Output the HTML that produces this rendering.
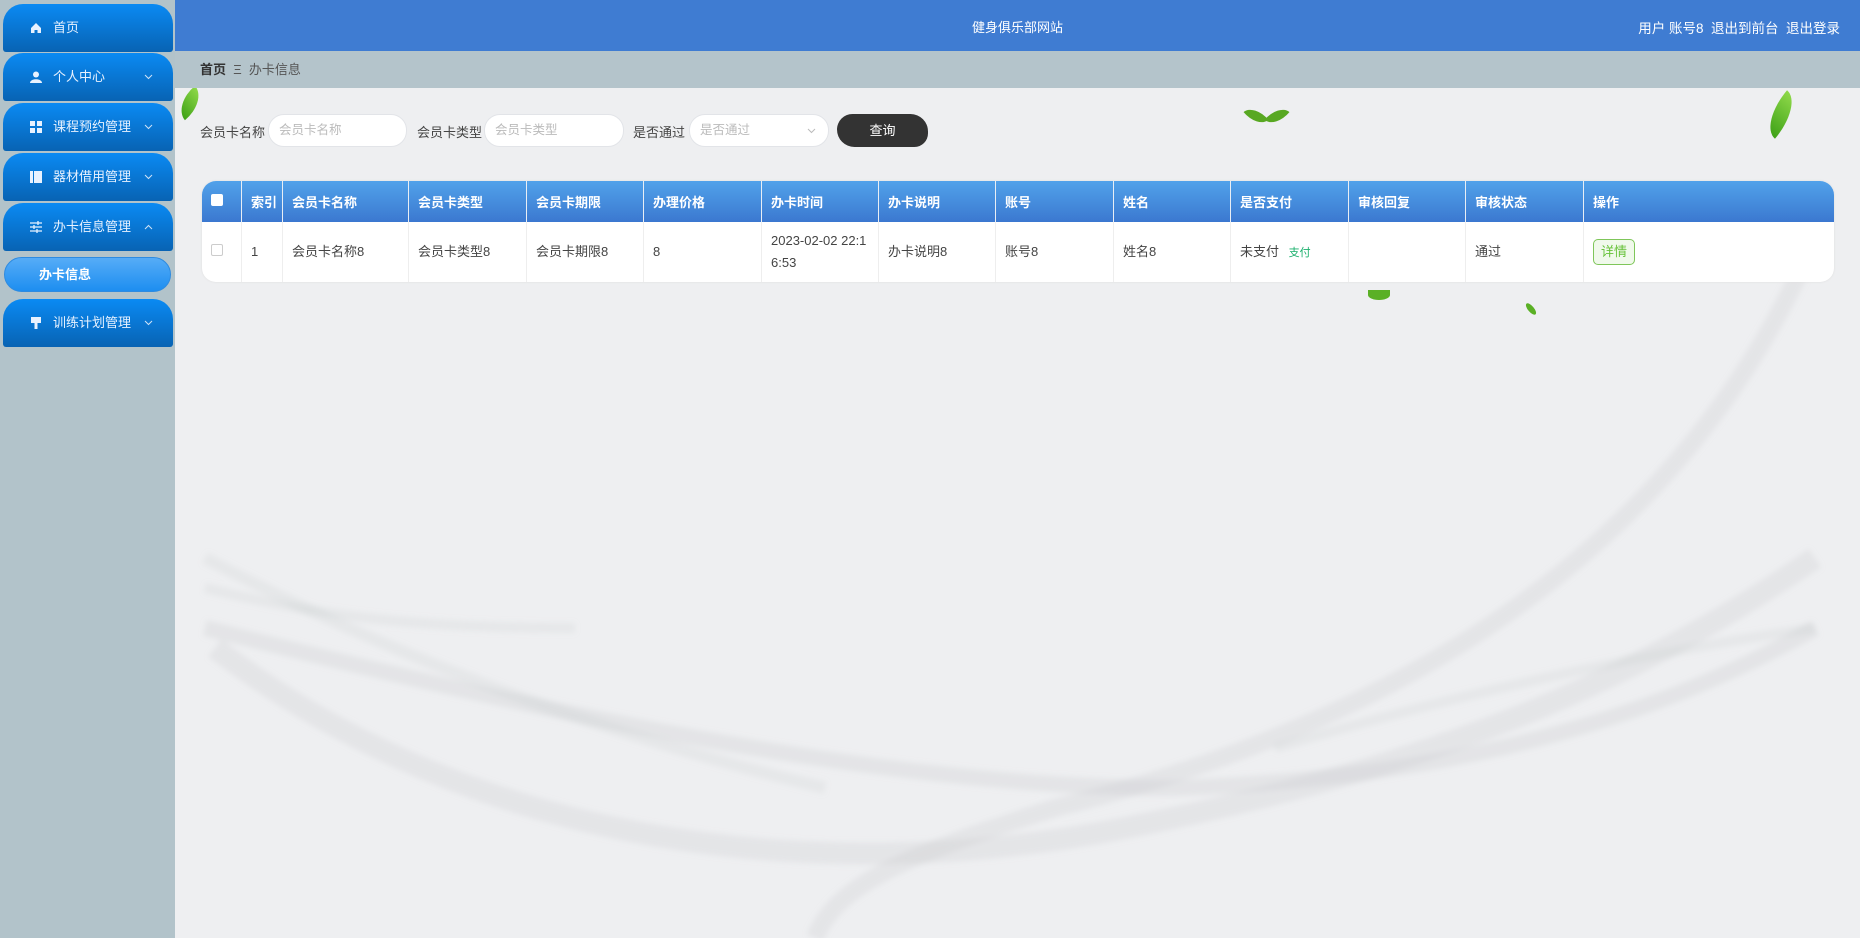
<!DOCTYPE html>
<html><head><meta charset="utf-8">
<style>
*{margin:0;padding:0;box-sizing:border-box}
body{width:1860px;height:938px;overflow:hidden;background:#eeeff1;font-family:"Liberation Sans","Noto Sans CJK SC",sans-serif;position:relative}
.side{position:absolute;left:0;top:0;width:175px;height:938px;background:#b2c3ca}
.mi{position:absolute;left:3px;width:170px;height:48px;border-radius:20px 20px 3px 3px;background:linear-gradient(#0a8af3,#0863b3);color:#e8f2ff;font-size:13px;line-height:48px;padding-left:50px}
.mi svg{position:absolute;left:27px;top:18px}
.mi svg.ar{left:auto;right:20px;top:21px}
.sub{position:absolute;left:4px;top:257px;width:167px;height:35px;border-radius:18px;background:linear-gradient(#56acf7,#1d8ef0);border:1px solid #2e8be0;color:#fff;font-size:13px;line-height:33px;padding-left:34px;font-weight:bold}
.head{position:absolute;left:175px;top:0;width:1685px;height:51px;background:#3f7cd2;color:#fff}
.bc{position:absolute;left:175px;top:51px;width:1685px;height:37px;background:#b4c4cb;font-size:13px;line-height:37px;padding-left:25px;color:#555}
.lab{position:absolute;top:122px;font-size:13px;color:#444}
.inp{position:absolute;top:114px;height:33px;background:#fff;border:1px solid #e2e4e8;border-radius:16px;font-size:12.5px;color:#bbb;line-height:31px;padding-left:10px}
.btn{position:absolute;left:837px;top:114px;width:91px;height:33px;background:#333;border-radius:16px 18px 14px 18px;color:#fff;font-size:13px;line-height:33px;text-align:center}
table{position:absolute;left:202px;top:181px;border-collapse:separate;border-spacing:0;font-size:13px;color:#444;background:#fff;border-radius:14px;overflow:hidden;box-shadow:0 0 2px #ddd}
th{height:41px;background:linear-gradient(#51a2ea,#3b78d0);color:#fff;text-align:left;padding-left:9px;font-weight:bold;border-right:1px solid #e8eef5}
td{height:60px;padding-left:9px;border-right:1px solid #eee;line-height:22px}
.cb{display:inline-block;width:12px;height:12px;border:1px solid #ccc;border-radius:2px;background:#fff}
</style></head><body>
<svg style="position:absolute;left:175px;top:88px" width="1685" height="850">
<defs><filter id="b"><feGaussianBlur stdDeviation="3"/></filter></defs>
<g fill="none" stroke="#b8b9bd" filter="url(#b)">
<path d="M40 560 C300 760 650 800 950 740 C1250 680 1450 600 1640 470" stroke-width="22" stroke-opacity=".18"/>
<path d="M30 540 C350 620 700 700 1000 700 C1300 690 1500 620 1640 540" stroke-width="16" stroke-opacity=".2"/>
<path d="M1640 150 C1500 480 1200 640 880 720 C720 770 660 800 640 850" stroke-width="18" stroke-opacity=".18"/>
<path d="M30 500 C150 530 250 540 400 540" stroke-width="10" stroke-opacity=".15"/>
<path d="M1100 660 C1300 600 1500 560 1640 540" stroke-width="10" stroke-opacity=".15"/>
<path d="M30 470 C200 560 400 640 650 700" stroke-width="12" stroke-opacity=".15"/>
</g>
</svg>
<div style="position:absolute;left:1249px;top:105px;width:14px;height:22px;background:#58a822;border-radius:0 100% 0 100%;transform:rotate(-40deg)"></div>
<div style="position:absolute;left:1270px;top:105px;width:14px;height:22px;background:#58a822;border-radius:100% 0 100% 0;transform:rotate(40deg)"></div>
<div style="position:absolute;left:1770px;top:92px;width:22px;height:45px;background:linear-gradient(#8fd94a,#3fa218);border-radius:0 100% 0 100%;transform:rotate(40deg)"></div>
<div style="position:absolute;left:180px;top:88px;width:20px;height:30px;background:linear-gradient(#8fd94a,#3fa218);border-radius:0 100% 0 100%;transform:rotate(50deg)"></div>
<div style="position:absolute;left:1368px;top:290px;width:22px;height:10px;background:#5ab025;border-radius:0 0 100% 100%"></div>
<div style="position:absolute;left:1528px;top:302px;width:6px;height:14px;background:#5ab025;border-radius:50%;transform:rotate(-40deg)"></div>
<div class="side">
<div class="mi" style="top:4px"><svg width="12" height="12" viewBox="0 0 12 12"><path d="M6 1 L11 6 V11 H7.5 V8 H4.5 V11 H1 V6Z" fill="#e8f2ff"/></svg>首页</div>
<div class="mi" style="top:53px"><svg width="12" height="12" viewBox="0 0 12 12"><circle cx="6" cy="3.5" r="3" fill="#e8f2ff"/><path d="M0 12 C0 7 12 7 12 12Z" fill="#e8f2ff"/></svg>个人中心<svg class="ar" width="9" height="6" viewBox="0 0 9 6"><path d="M1 1L4.5 4.5L8 1" stroke="#cfe3f7" fill="none"/></svg></div>
<div class="mi" style="top:103px"><svg width="12" height="12" viewBox="0 0 12 12" fill="#e8f2ff"><rect width="5" height="5"/><rect x="7" width="5" height="5"/><rect y="7" width="5" height="5"/><rect x="7" y="7" width="5" height="5"/></svg>课程预约管理<svg class="ar" width="9" height="6" viewBox="0 0 9 6"><path d="M1 1L4.5 4.5L8 1" stroke="#cfe3f7" fill="none"/></svg></div>
<div class="mi" style="top:153px"><svg width="12" height="12" viewBox="0 0 12 12" fill="#e8f2ff"><rect width="3" height="12"/><rect x="4" width="8" height="12"/></svg>器材借用管理<svg class="ar" width="9" height="6" viewBox="0 0 9 6"><path d="M1 1L4.5 4.5L8 1" stroke="#cfe3f7" fill="none"/></svg></div>
<div class="mi" style="top:203px"><svg width="12" height="12" viewBox="0 0 12 12" stroke="#e8f2ff" stroke-width="1.3"><path d="M0 2H12M0 6H12M0 10H12"/><path d="M8 0V4M4 4V8M7 8V12"/></svg>办卡信息管理<svg class="ar" width="9" height="6" viewBox="0 0 9 6"><path d="M1 5L4.5 1.5L8 5" stroke="#cfe3f7" fill="none"/></svg></div>
<div class="sub">办卡信息</div>
<div class="mi" style="top:299px"><svg width="12" height="12" viewBox="0 0 12 12" fill="#e8f2ff"><rect x="1" width="10" height="6"/><rect x="4.5" y="6" width="3" height="6"/></svg>训练计划管理<svg class="ar" width="9" height="6" viewBox="0 0 9 6"><path d="M1 1L4.5 4.5L8 1" stroke="#cfe3f7" fill="none"/></svg></div>
</div>
<div class="head"><div style="position:absolute;left:0;width:100%;text-align:center;top:17px;font-size:13px">健身俱乐部网站</div><div style="position:absolute;right:20px;top:17px;font-size:13.5px">用户 账号8&nbsp;&nbsp;退出到前台&nbsp;&nbsp;退出登录</div></div>
<div class="bc"><b style="color:#333">首页</b>&nbsp;&nbsp;Ξ&nbsp;&nbsp;办卡信息</div>
<div class="lab" style="left:200px">会员卡名称</div><div class="inp" style="left:268px;width:139px">会员卡名称</div>
<div class="lab" style="left:417px">会员卡类型</div><div class="inp" style="left:484px;width:140px">会员卡类型</div>
<div class="lab" style="left:633px">是否通过</div><div class="inp" style="left:689px;width:140px">是否通过<svg style="position:absolute;right:12px;top:13px" width="9" height="6" viewBox="0 0 9 6"><path d="M1 1L4.5 4.5L8 1" stroke="#bbb" fill="none"/></svg></div>
<div class="btn">查询</div>
<table>
<tr><th style="width:40px"><span class="cb" style="border:none"></span></th><th style="width:41px">索引</th><th style="width:126px">会员卡名称</th><th style="width:118px">会员卡类型</th><th style="width:117px">会员卡期限</th><th style="width:118px">办理价格</th><th style="width:117px">办卡时间</th><th style="width:117px">办卡说明</th><th style="width:118px">账号</th><th style="width:117px">姓名</th><th style="width:118px">是否支付</th><th style="width:117px">审核回复</th><th style="width:118px">审核状态</th><th style="width:250px;border-right:none">操作</th></tr>
<tr><td><span class="cb"></span></td><td>1</td><td>会员卡名称8</td><td>会员卡类型8</td><td>会员卡期限8</td><td>8</td><td style="word-break:break-all;padding-right:6px">2023-02-02 22:16:53</td><td>办卡说明8</td><td>账号8</td><td>姓名8</td><td>未支付 <span style="color:#1aaf6c;font-size:11px;margin-left:6px">支付</span></td><td></td><td>通过</td><td style="border-right:none"><span style="display:inline-block;border:1px solid #7fc65a;background:#f0f9eb;color:#67c23a;border-radius:5px;padding:0 7px;line-height:24px;font-size:13px">详情</span></td></tr>
</table>
</body></html>
